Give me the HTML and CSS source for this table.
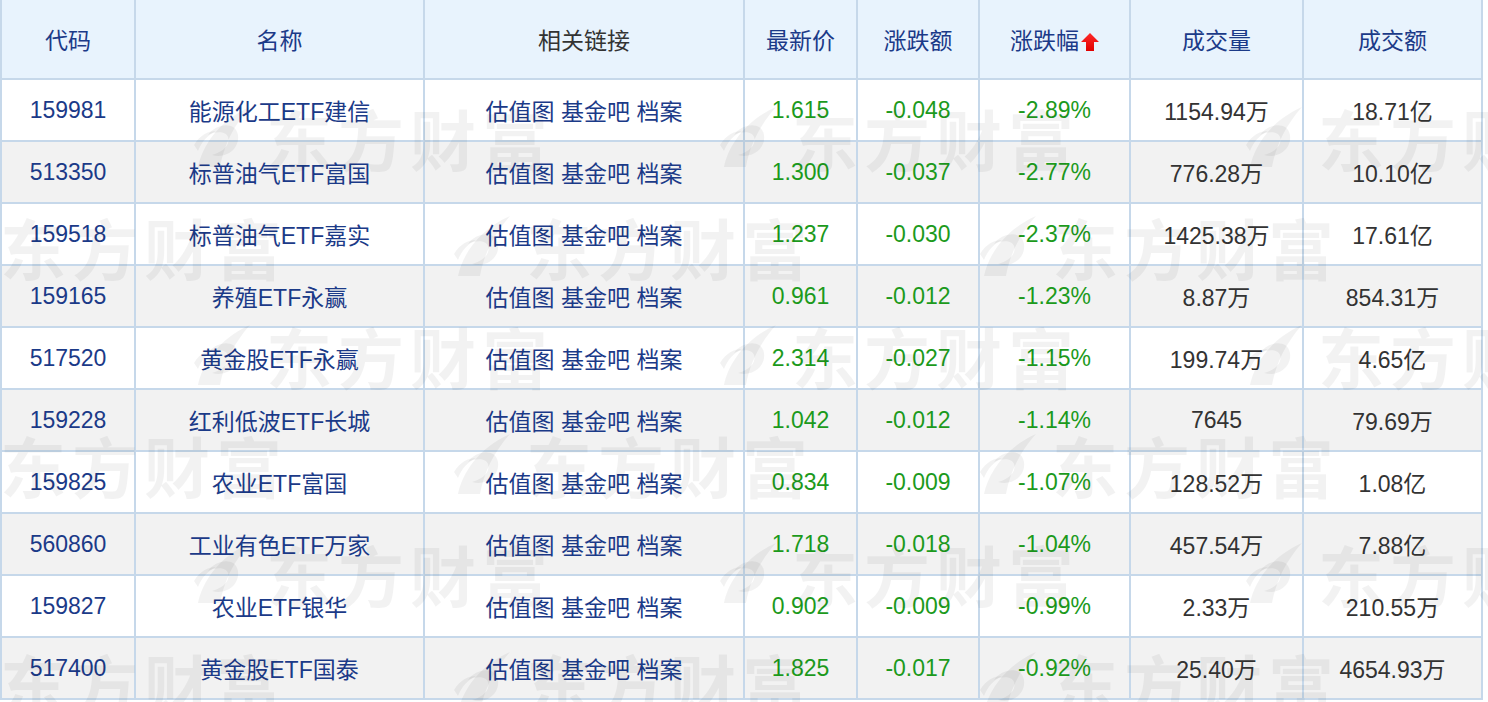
FILE: index.html
```html
<!DOCTYPE html>
<html lang="zh-CN">
<head>
<meta charset="utf-8">
<title>ETF 行情</title>
<link rel="stylesheet" href="styles.css">
</head>
<body>
<div class="wrap">
  <table class="etf">
    <colgroup>
      <col class="c-code"><col class="c-name"><col class="c-links"><col class="c-price">
      <col class="c-chg"><col class="c-pct"><col class="c-vol"><col class="c-amt">
    </colgroup>
    <thead>
      <tr>
        <th><a class="sort">代码</a></th>
        <th><a class="sort">名称</a></th>
        <th class="plain">相关链接</th>
        <th><a class="sort">最新价</a></th>
        <th><a class="sort">涨跌额</a></th>
        <th><a class="sort">涨跌幅</a><svg class="arrow" viewBox="0 0 18 18" aria-hidden="true"><defs><linearGradient id="ar" x1="0" y1="0" x2="0" y2="1"><stop offset="0" stop-color="#ff2a2a"/><stop offset="1" stop-color="#e00000"/></linearGradient></defs><path d="M9 0 L18 9 L13 9 L13 18 L5 18 L5 9 L0 9 Z" fill="url(#ar)"/></svg></th>
        <th><a class="sort">成交量</a></th>
        <th><a class="sort">成交额</a></th>
      </tr>
    </thead>
    <tbody>
      <tr><td class="link">159981</td><td class="link">能源化工ETF建信</td><td class="links"><a>估值图</a> <a>基金吧</a> <a>档案</a></td><td class="down">1.615</td><td class="down">-0.048</td><td class="down">-2.89%</td><td>1154.94万</td><td>18.71亿</td></tr>
      <tr><td class="link">513350</td><td class="link">标普油气ETF富国</td><td class="links"><a>估值图</a> <a>基金吧</a> <a>档案</a></td><td class="down">1.300</td><td class="down">-0.037</td><td class="down">-2.77%</td><td>776.28万</td><td>10.10亿</td></tr>
      <tr><td class="link">159518</td><td class="link">标普油气ETF嘉实</td><td class="links"><a>估值图</a> <a>基金吧</a> <a>档案</a></td><td class="down">1.237</td><td class="down">-0.030</td><td class="down">-2.37%</td><td>1425.38万</td><td>17.61亿</td></tr>
      <tr><td class="link">159165</td><td class="link">养殖ETF永赢</td><td class="links"><a>估值图</a> <a>基金吧</a> <a>档案</a></td><td class="down">0.961</td><td class="down">-0.012</td><td class="down">-1.23%</td><td>8.87万</td><td>854.31万</td></tr>
      <tr><td class="link">517520</td><td class="link">黄金股ETF永赢</td><td class="links"><a>估值图</a> <a>基金吧</a> <a>档案</a></td><td class="down">2.314</td><td class="down">-0.027</td><td class="down">-1.15%</td><td>199.74万</td><td>4.65亿</td></tr>
      <tr><td class="link">159228</td><td class="link">红利低波ETF长城</td><td class="links"><a>估值图</a> <a>基金吧</a> <a>档案</a></td><td class="down">1.042</td><td class="down">-0.012</td><td class="down">-1.14%</td><td>7645</td><td>79.69万</td></tr>
      <tr><td class="link">159825</td><td class="link">农业ETF富国</td><td class="links"><a>估值图</a> <a>基金吧</a> <a>档案</a></td><td class="down">0.834</td><td class="down">-0.009</td><td class="down">-1.07%</td><td>128.52万</td><td>1.08亿</td></tr>
      <tr><td class="link">560860</td><td class="link">工业有色ETF万家</td><td class="links"><a>估值图</a> <a>基金吧</a> <a>档案</a></td><td class="down">1.718</td><td class="down">-0.018</td><td class="down">-1.04%</td><td>457.54万</td><td>7.88亿</td></tr>
      <tr><td class="link">159827</td><td class="link">农业ETF银华</td><td class="links"><a>估值图</a> <a>基金吧</a> <a>档案</a></td><td class="down">0.902</td><td class="down">-0.009</td><td class="down">-0.99%</td><td>2.33万</td><td>210.55万</td></tr>
      <tr><td class="link">517400</td><td class="link">黄金股ETF国泰</td><td class="links"><a>估值图</a> <a>基金吧</a> <a>档案</a></td><td class="down">1.825</td><td class="down">-0.017</td><td class="down">-0.92%</td><td>25.40万</td><td>4654.93万</td></tr>
    </tbody>
  </table>

  <div class="watermark" aria-hidden="true">
    <div class="wm-row wm-a">
      <span class="wm"><svg class="wm-logo" viewBox="0 0 64 64"><path d="M8 62 C12 42 28 16 60 2 C44 20 34 40 30 62 Z"/><path d="M18 30 C26 18 46 16 48 30 C50 44 36 54 22 50 C36 46 40 38 38 32 C36 26 26 26 18 30 Z"/><path d="M4 40 C10 30 18 26 26 26 C18 30 12 36 8 46 Z"/></svg><span class="wm-text">东方财富</span></span>
      <span class="wm"><svg class="wm-logo" viewBox="0 0 64 64"><path d="M8 62 C12 42 28 16 60 2 C44 20 34 40 30 62 Z"/><path d="M18 30 C26 18 46 16 48 30 C50 44 36 54 22 50 C36 46 40 38 38 32 C36 26 26 26 18 30 Z"/><path d="M4 40 C10 30 18 26 26 26 C18 30 12 36 8 46 Z"/></svg><span class="wm-text">东方财富</span></span>
      <span class="wm"><svg class="wm-logo" viewBox="0 0 64 64"><path d="M8 62 C12 42 28 16 60 2 C44 20 34 40 30 62 Z"/><path d="M18 30 C26 18 46 16 48 30 C50 44 36 54 22 50 C36 46 40 38 38 32 C36 26 26 26 18 30 Z"/><path d="M4 40 C10 30 18 26 26 26 C18 30 12 36 8 46 Z"/></svg><span class="wm-text">东方财富</span></span>
    </div>
    <div class="wm-row wm-b">
      <span class="wm"><svg class="wm-logo" viewBox="0 0 64 64"><path d="M8 62 C12 42 28 16 60 2 C44 20 34 40 30 62 Z"/><path d="M18 30 C26 18 46 16 48 30 C50 44 36 54 22 50 C36 46 40 38 38 32 C36 26 26 26 18 30 Z"/><path d="M4 40 C10 30 18 26 26 26 C18 30 12 36 8 46 Z"/></svg><span class="wm-text">东方财富</span></span>
      <span class="wm"><svg class="wm-logo" viewBox="0 0 64 64"><path d="M8 62 C12 42 28 16 60 2 C44 20 34 40 30 62 Z"/><path d="M18 30 C26 18 46 16 48 30 C50 44 36 54 22 50 C36 46 40 38 38 32 C36 26 26 26 18 30 Z"/><path d="M4 40 C10 30 18 26 26 26 C18 30 12 36 8 46 Z"/></svg><span class="wm-text">东方财富</span></span>
      <span class="wm"><svg class="wm-logo" viewBox="0 0 64 64"><path d="M8 62 C12 42 28 16 60 2 C44 20 34 40 30 62 Z"/><path d="M18 30 C26 18 46 16 48 30 C50 44 36 54 22 50 C36 46 40 38 38 32 C36 26 26 26 18 30 Z"/><path d="M4 40 C10 30 18 26 26 26 C18 30 12 36 8 46 Z"/></svg><span class="wm-text">东方财富</span></span>
    </div>
    <div class="wm-row wm-a">
      <span class="wm"><svg class="wm-logo" viewBox="0 0 64 64"><path d="M8 62 C12 42 28 16 60 2 C44 20 34 40 30 62 Z"/><path d="M18 30 C26 18 46 16 48 30 C50 44 36 54 22 50 C36 46 40 38 38 32 C36 26 26 26 18 30 Z"/><path d="M4 40 C10 30 18 26 26 26 C18 30 12 36 8 46 Z"/></svg><span class="wm-text">东方财富</span></span>
      <span class="wm"><svg class="wm-logo" viewBox="0 0 64 64"><path d="M8 62 C12 42 28 16 60 2 C44 20 34 40 30 62 Z"/><path d="M18 30 C26 18 46 16 48 30 C50 44 36 54 22 50 C36 46 40 38 38 32 C36 26 26 26 18 30 Z"/><path d="M4 40 C10 30 18 26 26 26 C18 30 12 36 8 46 Z"/></svg><span class="wm-text">东方财富</span></span>
      <span class="wm"><svg class="wm-logo" viewBox="0 0 64 64"><path d="M8 62 C12 42 28 16 60 2 C44 20 34 40 30 62 Z"/><path d="M18 30 C26 18 46 16 48 30 C50 44 36 54 22 50 C36 46 40 38 38 32 C36 26 26 26 18 30 Z"/><path d="M4 40 C10 30 18 26 26 26 C18 30 12 36 8 46 Z"/></svg><span class="wm-text">东方财富</span></span>
    </div>
    <div class="wm-row wm-b">
      <span class="wm"><svg class="wm-logo" viewBox="0 0 64 64"><path d="M8 62 C12 42 28 16 60 2 C44 20 34 40 30 62 Z"/><path d="M18 30 C26 18 46 16 48 30 C50 44 36 54 22 50 C36 46 40 38 38 32 C36 26 26 26 18 30 Z"/><path d="M4 40 C10 30 18 26 26 26 C18 30 12 36 8 46 Z"/></svg><span class="wm-text">东方财富</span></span>
      <span class="wm"><svg class="wm-logo" viewBox="0 0 64 64"><path d="M8 62 C12 42 28 16 60 2 C44 20 34 40 30 62 Z"/><path d="M18 30 C26 18 46 16 48 30 C50 44 36 54 22 50 C36 46 40 38 38 32 C36 26 26 26 18 30 Z"/><path d="M4 40 C10 30 18 26 26 26 C18 30 12 36 8 46 Z"/></svg><span class="wm-text">东方财富</span></span>
      <span class="wm"><svg class="wm-logo" viewBox="0 0 64 64"><path d="M8 62 C12 42 28 16 60 2 C44 20 34 40 30 62 Z"/><path d="M18 30 C26 18 46 16 48 30 C50 44 36 54 22 50 C36 46 40 38 38 32 C36 26 26 26 18 30 Z"/><path d="M4 40 C10 30 18 26 26 26 C18 30 12 36 8 46 Z"/></svg><span class="wm-text">东方财富</span></span>
    </div>
    <div class="wm-row wm-a">
      <span class="wm"><svg class="wm-logo" viewBox="0 0 64 64"><path d="M8 62 C12 42 28 16 60 2 C44 20 34 40 30 62 Z"/><path d="M18 30 C26 18 46 16 48 30 C50 44 36 54 22 50 C36 46 40 38 38 32 C36 26 26 26 18 30 Z"/><path d="M4 40 C10 30 18 26 26 26 C18 30 12 36 8 46 Z"/></svg><span class="wm-text">东方财富</span></span>
      <span class="wm"><svg class="wm-logo" viewBox="0 0 64 64"><path d="M8 62 C12 42 28 16 60 2 C44 20 34 40 30 62 Z"/><path d="M18 30 C26 18 46 16 48 30 C50 44 36 54 22 50 C36 46 40 38 38 32 C36 26 26 26 18 30 Z"/><path d="M4 40 C10 30 18 26 26 26 C18 30 12 36 8 46 Z"/></svg><span class="wm-text">东方财富</span></span>
      <span class="wm"><svg class="wm-logo" viewBox="0 0 64 64"><path d="M8 62 C12 42 28 16 60 2 C44 20 34 40 30 62 Z"/><path d="M18 30 C26 18 46 16 48 30 C50 44 36 54 22 50 C36 46 40 38 38 32 C36 26 26 26 18 30 Z"/><path d="M4 40 C10 30 18 26 26 26 C18 30 12 36 8 46 Z"/></svg><span class="wm-text">东方财富</span></span>
    </div>
    <div class="wm-row wm-b">
      <span class="wm"><svg class="wm-logo" viewBox="0 0 64 64"><path d="M8 62 C12 42 28 16 60 2 C44 20 34 40 30 62 Z"/><path d="M18 30 C26 18 46 16 48 30 C50 44 36 54 22 50 C36 46 40 38 38 32 C36 26 26 26 18 30 Z"/><path d="M4 40 C10 30 18 26 26 26 C18 30 12 36 8 46 Z"/></svg><span class="wm-text">东方财富</span></span>
      <span class="wm"><svg class="wm-logo" viewBox="0 0 64 64"><path d="M8 62 C12 42 28 16 60 2 C44 20 34 40 30 62 Z"/><path d="M18 30 C26 18 46 16 48 30 C50 44 36 54 22 50 C36 46 40 38 38 32 C36 26 26 26 18 30 Z"/><path d="M4 40 C10 30 18 26 26 26 C18 30 12 36 8 46 Z"/></svg><span class="wm-text">东方财富</span></span>
      <span class="wm"><svg class="wm-logo" viewBox="0 0 64 64"><path d="M8 62 C12 42 28 16 60 2 C44 20 34 40 30 62 Z"/><path d="M18 30 C26 18 46 16 48 30 C50 44 36 54 22 50 C36 46 40 38 38 32 C36 26 26 26 18 30 Z"/><path d="M4 40 C10 30 18 26 26 26 C18 30 12 36 8 46 Z"/></svg><span class="wm-text">东方财富</span></span>
    </div>
  </div>
</div>
</body>
</html>
```

FILE: styles.css
```css
html, body {
  margin: 0;
  padding: 0;
  background: #ffffff;
}

body {
  font-family: "Liberation Sans", "Noto Sans CJK SC", sans-serif;
  font-size: 23px;
  color: #333333;
  overflow: hidden;
}

.wrap {
  position: relative;
  width: 1488px;
  height: 702px;
  overflow: hidden;
}

.etf {
  border-collapse: separate;
  border-spacing: 2px;
  background: #c6d8ea;
  table-layout: fixed;
  width: 1483px;
  margin-top: -2px;
}

.c-code  { width: 132px; }
.c-name  { width: 287px; }
.c-links { width: 318px; }
.c-price { width: 111px; }
.c-chg   { width: 120px; }
.c-pct   { width: 149px; }
.c-vol   { width: 171px; }
.c-amt   { width: 177px; }

.etf th,
.etf td {
  padding: 0;
  text-align: center;
  vertical-align: middle;
  white-space: nowrap;
  font-weight: normal;
}

.etf th {
  height: 78px;
  background: #e8f3fd;
  color: #1b3a88;
}

.etf th.plain {
  color: #333333;
}

.etf th .sort {
  color: #1b3a88;
}

.arrow {
  width: 18px;
  height: 18px;
  margin-left: 2px;
  vertical-align: -2px;
}

.etf td {
  height: 60px;
  background: #ffffff;
  color: #333333;
}

.etf tbody tr:nth-child(even) td {
  background: #f2f2f2;
}

.etf td.link,
.etf td.links a {
  color: #1b3a88;
}

.etf td.down {
  color: #1c9a1c;
}

/* watermark overlay */
.watermark {
  position: absolute;
  top: 80px;
  left: 0;
  right: 0;
  bottom: 0;
  overflow: hidden;
  pointer-events: none;
  display: flex;
  flex-direction: column;
  gap: 39px;
  padding-top: 22px;
}

.wm-row {
  display: flex;
  gap: 162px;
  flex-shrink: 0;
  height: 70px;
}

.wm-a { margin-left: 190px; }
.wm-b { margin-left: -76px; }

.wm {
  display: flex;
  align-items: center;
  gap: 12px;
  flex-shrink: 0;
}

.wm-logo {
  width: 64px;
  height: 64px;
  fill: rgba(0, 0, 0, 0.05);
  flex-shrink: 0;
}

.wm-text {
  font-family: "Noto Sans CJK SC", sans-serif;
  font-weight: 700;
  font-size: 66px;
  line-height: 70px;
  letter-spacing: 6px;
  color: rgba(0, 0, 0, 0.05);
  white-space: nowrap;
}
```
